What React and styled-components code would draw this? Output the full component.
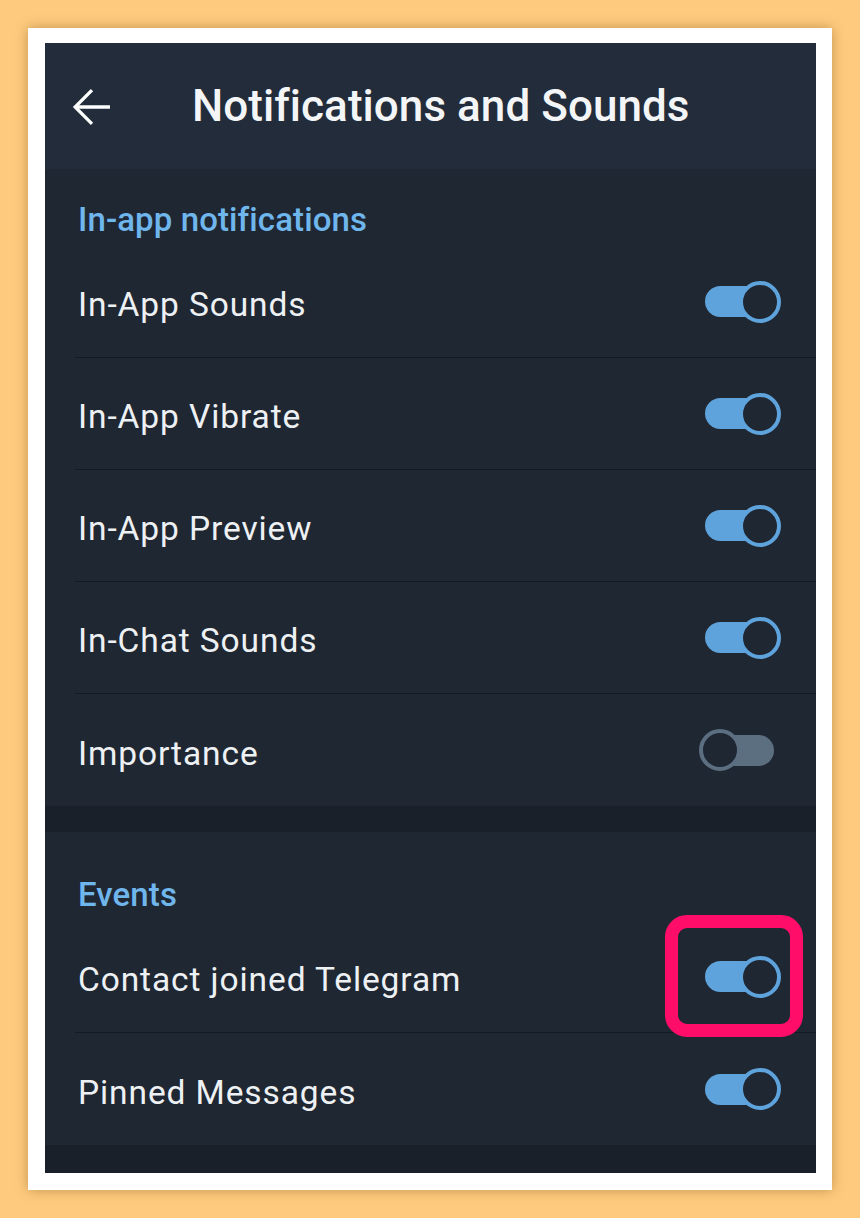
import React from 'react'
import styled, { createGlobalStyle } from 'styled-components'

const GlobalStyle = createGlobalStyle`
  body {
    margin: 0;
    background: #fecb7e;
    font-family: Roboto, "Noto Sans", sans-serif;
  }
`

const Page = styled.div`
  width: 860px;
  height: 1218px;
  padding: 28px 0 0 28px;
  box-sizing: border-box;
`

const Frame = styled.div`
  width: 804px;
  height: 1162px;
  box-sizing: border-box;
  background: #fff;
  padding: 15px 16px 17px 17px;
  box-shadow: 0 0 12px rgba(120, 80, 20, 0.45);
`

const Screen = styled.div`
  height: 100%;
  background: #1f2733;
  display: flex;
  flex-direction: column;
  overflow: hidden;
`

const Header = styled.header`
  height: 126px;
  flex-shrink: 0;
  background: #222c3a;
  display: flex;
  align-items: center;
  padding-left: 20px;
  box-shadow: 0 1px 2px rgba(0, 0, 0, 0.25);
`

const BackButton = styled.button`
  width: 54px;
  height: 54px;
  padding: 0;
  border: none;
  background: none;
  display: flex;
  align-items: center;
  justify-content: center;
  margin-right: 73px;
  margin-top: 2px;
`

const Title = styled.h1`
  margin: 0;
  color: #f3f5f7;
  font-size: 44px;
  font-weight: 500;
  letter-spacing: 0.05px;
`

const Section = styled.section`
  background: #1f2733;
  padding-top: ${p => p.$top}px;
`

const SectionTitle = styled.h2`
  margin: 0;
  padding-left: 33px;
  height: ${p => p.$h}px;
  color: #6fb6ec;
  font-size: 33px;
  font-weight: 500;
  line-height: 40px;
  letter-spacing: 0.1px;
`

const Row = styled.div`
  height: 112px;
  margin-left: 30px;
  padding-right: 35px;
  display: flex;
  align-items: center;
  justify-content: space-between;
  border-bottom: ${p => (p.$last ? 'none' : '1.5px solid #141a22')};
  box-sizing: border-box;
`

const Label = styled.span`
  color: #eef1f4;
  font-size: 33.5px;
  letter-spacing: 0.9px;
  padding: 6px 0 0 3px;
`

const Switch = styled.div`
  position: relative;
  width: 76px;
  height: 42px;
  flex-shrink: 0;
`

const Track = styled.div`
  position: absolute;
  left: 0;
  top: 5.5px;
  width: ${p => (p.$on ? 70 : 69)}px;
  height: 31px;
  border-radius: 16px;
  background: ${p => (p.$on ? '#5ea3dc' : '#5c6f80')};
`

const Thumb = styled.div`
  position: absolute;
  top: 0;
  left: ${p => (p.$on ? 34 : -6)}px;
  width: 42px;
  height: 42px;
  box-sizing: border-box;
  border-radius: 50%;
  border: 4px solid ${p => (p.$on ? '#5ea3dc' : '#5c6f80')};
  background: #1f2733;
`

const Highlight = styled.div`
  position: absolute;
  left: -40px;
  top: -41px;
  width: 138px;
  height: 122px;
  box-sizing: border-box;
  border: 13px solid #ff0d68;
  border-radius: 22px;
  pointer-events: none;
`

const Gap = styled.div`
  height: ${p => p.$h}px;
  flex-shrink: 0;
  background: #19202a;
`

const Toggle = ({ on, marked }) => (
  <Switch>
    <Track $on={on} />
    <Thumb $on={on} />
    {marked && <Highlight />}
  </Switch>
)

const inApp = [
  ['In-App Sounds', true],
  ['In-App Vibrate', true],
  ['In-App Preview', true],
  ['In-Chat Sounds', true],
  ['Importance', false],
]

export default function App() {
  return (
    <>
      <GlobalStyle />
      <Page>
        <Frame>
          <Screen>
            <Header>
              <BackButton aria-label="Back">
                <svg width="54" height="54" viewBox="0 0 24 24" fill="none" stroke="#fff" strokeWidth="1.45" strokeLinecap="butt">
                  <path d="M20 12H4.6" />
                  <path d="M12 4.5L4.5 12l7.5 7.5" />
                </svg>
              </BackButton>
              <Title>Notifications and Sounds</Title>
            </Header>

            <Section $top={31}>
              <SectionTitle $h={46}>In-app notifications</SectionTitle>
              {inApp.map(([label, on], i) => (
                <Row key={label} $last={i === inApp.length - 1}>
                  <Label>{label}</Label>
                  <Toggle on={on} />
                </Row>
              ))}
            </Section>

            <Gap $h={26} />

            <Section $top={43}>
              <SectionTitle $h={46}>Events</SectionTitle>
              <Row>
                <Label>Contact joined Telegram</Label>
                <Toggle on marked />
              </Row>
              <Row $last>
                <Label>Pinned Messages</Label>
                <Toggle on />
              </Row>
            </Section>

            <Gap $h={40} />
          </Screen>
        </Frame>
      </Page>
    </>
  )
}
